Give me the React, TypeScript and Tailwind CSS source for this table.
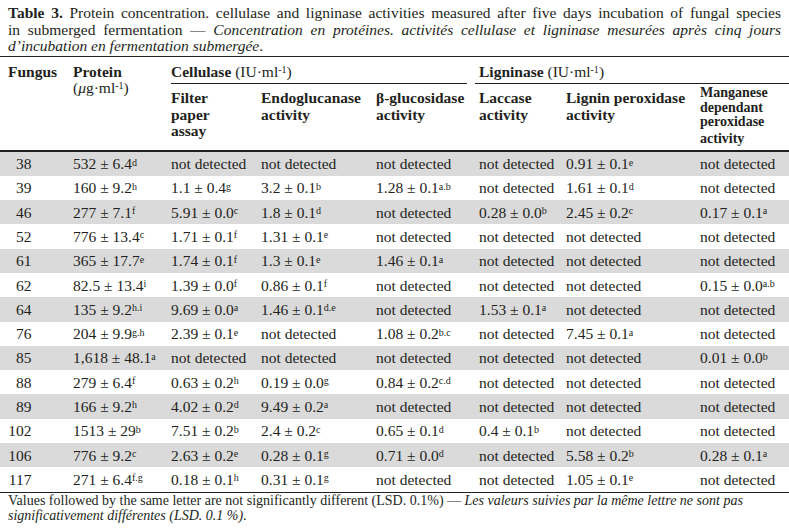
const cols = "grid grid-cols-[73px_98px_90px_115px_103px_87px_134px_89px]";

const rows: string[][] = [
  ["38", "532 ± 6.4^d", "nd", "nd", "nd", "nd", "0.91 ± 0.1^e", "nd"],
  ["39", "160 ± 9.2^h", "1.1 ± 0.4^g", "3.2 ± 0.1^b", "1.28 ± 0.1^a.b", "nd", "1.61 ± 0.1^d", "nd"],
  ["46", "277 ± 7.1^f", "5.91 ± 0.0^c", "1.8 ± 0.1^d", "nd", "0.28 ± 0.0^b", "2.45 ± 0.2^c", "0.17 ± 0.1^a"],
  ["52", "776 ± 13.4^c", "1.71 ± 0.1^f", "1.31 ± 0.1^e", "nd", "nd", "nd", "nd"],
  ["61", "365 ± 17.7^e", "1.74 ± 0.1^f", "1.3 ± 0.1^e", "1.46 ± 0.1^a", "nd", "nd", "nd"],
  ["62", "82.5 ± 13.4^i", "1.39 ± 0.0^f", "0.86 ± 0.1^f", "nd", "nd", "nd", "0.15 ± 0.0^a.b"],
  ["64", "135 ± 9.2^h.i", "9.69 ± 0.0^a", "1.46 ± 0.1^d.e", "nd", "1.53 ± 0.1^a", "nd", "nd"],
  ["76", "204 ± 9.9^g.h", "2.39 ± 0.1^e", "nd", "1.08 ± 0.2^b.c", "nd", "7.45 ± 0.1^a", "nd"],
  ["85", "1,618 ± 48.1^a", "nd", "nd", "nd", "nd", "nd", "0.01 ± 0.0^b"],
  ["88", "279 ± 6.4^f", "0.63 ± 0.2^h", "0.19 ± 0.0^g", "0.84 ± 0.2^c.d", "nd", "nd", "nd"],
  ["89", "166 ± 9.2^h", "4.02 ± 0.2^d", "9.49 ± 0.2^a", "nd", "nd", "nd", "nd"],
  ["102", "1513 ± 29^b", "7.51 ± 0.2^b", "2.4 ± 0.2^c", "0.65 ± 0.1^d", "0.4 ± 0.1^b", "nd", "nd"],
  ["106", "776 ± 9.2^c", "2.63 ± 0.2^e", "0.28 ± 0.1^g", "0.71 ± 0.0^d", "nd", "5.58 ± 0.2^b", "0.28 ± 0.1^a"],
  ["117", "271 ± 6.4^f.g", "0.18 ± 0.1^h", "0.31 ± 0.1^g", "nd", "nd", "1.05 ± 0.1^e", "nd"],
];

function Value({ v }: { v: string }) {
  if (v === "nd") return <>not detected</>;
  const [num, sup] = v.split("^");
  return (
    <>
      {num}
      <sup className="text-[10px] -top-[3.5px]">{sup}</sup>
    </>
  );
}

function Unit() {
  return (
    <span className="font-normal">
      (IU·ml<sup className="text-[10px] -top-[4px]">-1</sup>)
    </span>
  );
}

export default function App() {
  return (
    <div className="w-[789px] h-[528px] overflow-hidden bg-white text-[#231f20] font-['Liberation_Serif','Times_New_Roman',serif]">
      {/* caption */}
      <div className="px-[8px] pt-[5px] text-[15.5px] leading-[16.5px]">
        <div className="text-justify [text-align-last:justify] whitespace-nowrap">
          <b>Table 3.</b> Protein concentration. cellulase and ligninase activities measured after five days incubation of fungal species
        </div>
        <div className="text-justify [text-align-last:justify] whitespace-nowrap">
          in submerged fermentation — <i>Concentration en protéines. activités cellulase et ligninase mesurées après cinq jours</i>
        </div>
        <div>
          <i>d’incubation en fermentation submergée</i>.
        </div>
      </div>
      <div className="mt-[1.5px] h-px bg-[#231f20]" />

      {/* column headers */}
      <div className={`${cols} h-[93px] text-[15.5px] leading-[16.25px] font-bold`}>
        <div className="row-span-2 pl-[8px] pt-[6.5px]">Fungus</div>
        <div className="row-span-2 pt-[6.5px] leading-[16.5px]">
          Protein
          <br />
          <span className="font-normal">
            (<i>μ</i>g·ml<sup className="text-[10px] -top-[4px]">-1</sup>)
          </span>
        </div>
        <div className="col-span-3 pt-[6.5px]">
          <div className="whitespace-nowrap">
            Cellulase <Unit />
          </div>
          <div className="mt-[3.5px] mr-[12px] h-px bg-[#231f20]" />
        </div>
        <div className="col-span-3 pt-[6.5px]">
          <div className="whitespace-nowrap">
            Ligninase <Unit />
          </div>
          <div className="mt-[3.5px] -ml-[4px] h-px bg-[#231f20]" />
        </div>
        <div className="pt-[2px]">
          Filter
          <br />
          paper
          <br />
          assay
        </div>
        <div className="pt-[2px]">
          Endoglucanase
          <br />
          activity
        </div>
        <div className="pt-[2px] whitespace-nowrap">
          β-glucosidase
          <br />
          activity
        </div>
        <div className="pt-[2px]">
          Laccase
          <br />
          activity
        </div>
        <div className="pt-[2px] whitespace-nowrap">
          Lignin peroxidase
          <br />
          activity
        </div>
        <div className="-mt-[2px] text-[14px] leading-[14.3px]">
          Manganese
          <br />
          dependant
          <br />
          peroxidase
          <div className="mt-[2.4px]">activity</div>
        </div>
      </div>
      <div className="h-[1.5px] bg-[#231f20]" />

      {/* data */}
      <div className="text-[15.5px]">
        {rows.map((r, i) => (
          <div
            key={r[0]}
            className={`${cols} h-[24.3px] items-center whitespace-nowrap ${i % 2 === 0 ? "bg-[#dadada]" : "bg-white"}`}
          >
            <div className="pl-[8px]">
              <span className="inline-block w-[23.5px] text-right">{r[0]}</span>
            </div>
            {r.slice(1).map((v, j) => (
              <div key={j}>
                <Value v={v} />
              </div>
            ))}
          </div>
        ))}
      </div>
      <div className="h-px bg-[#231f20]" />

      {/* footnote */}
      <div className="px-[8px] text-[14px] leading-[15.5px]">
        Values followed by the same letter are not significantly different (LSD. 0.1%) —{" "}
        <i>Les valeurs suivies par la même lettre ne sont pas</i>
        <br />
        <i>significativement différentes (LSD. 0.1 %)</i>.
      </div>
    </div>
  );
}
